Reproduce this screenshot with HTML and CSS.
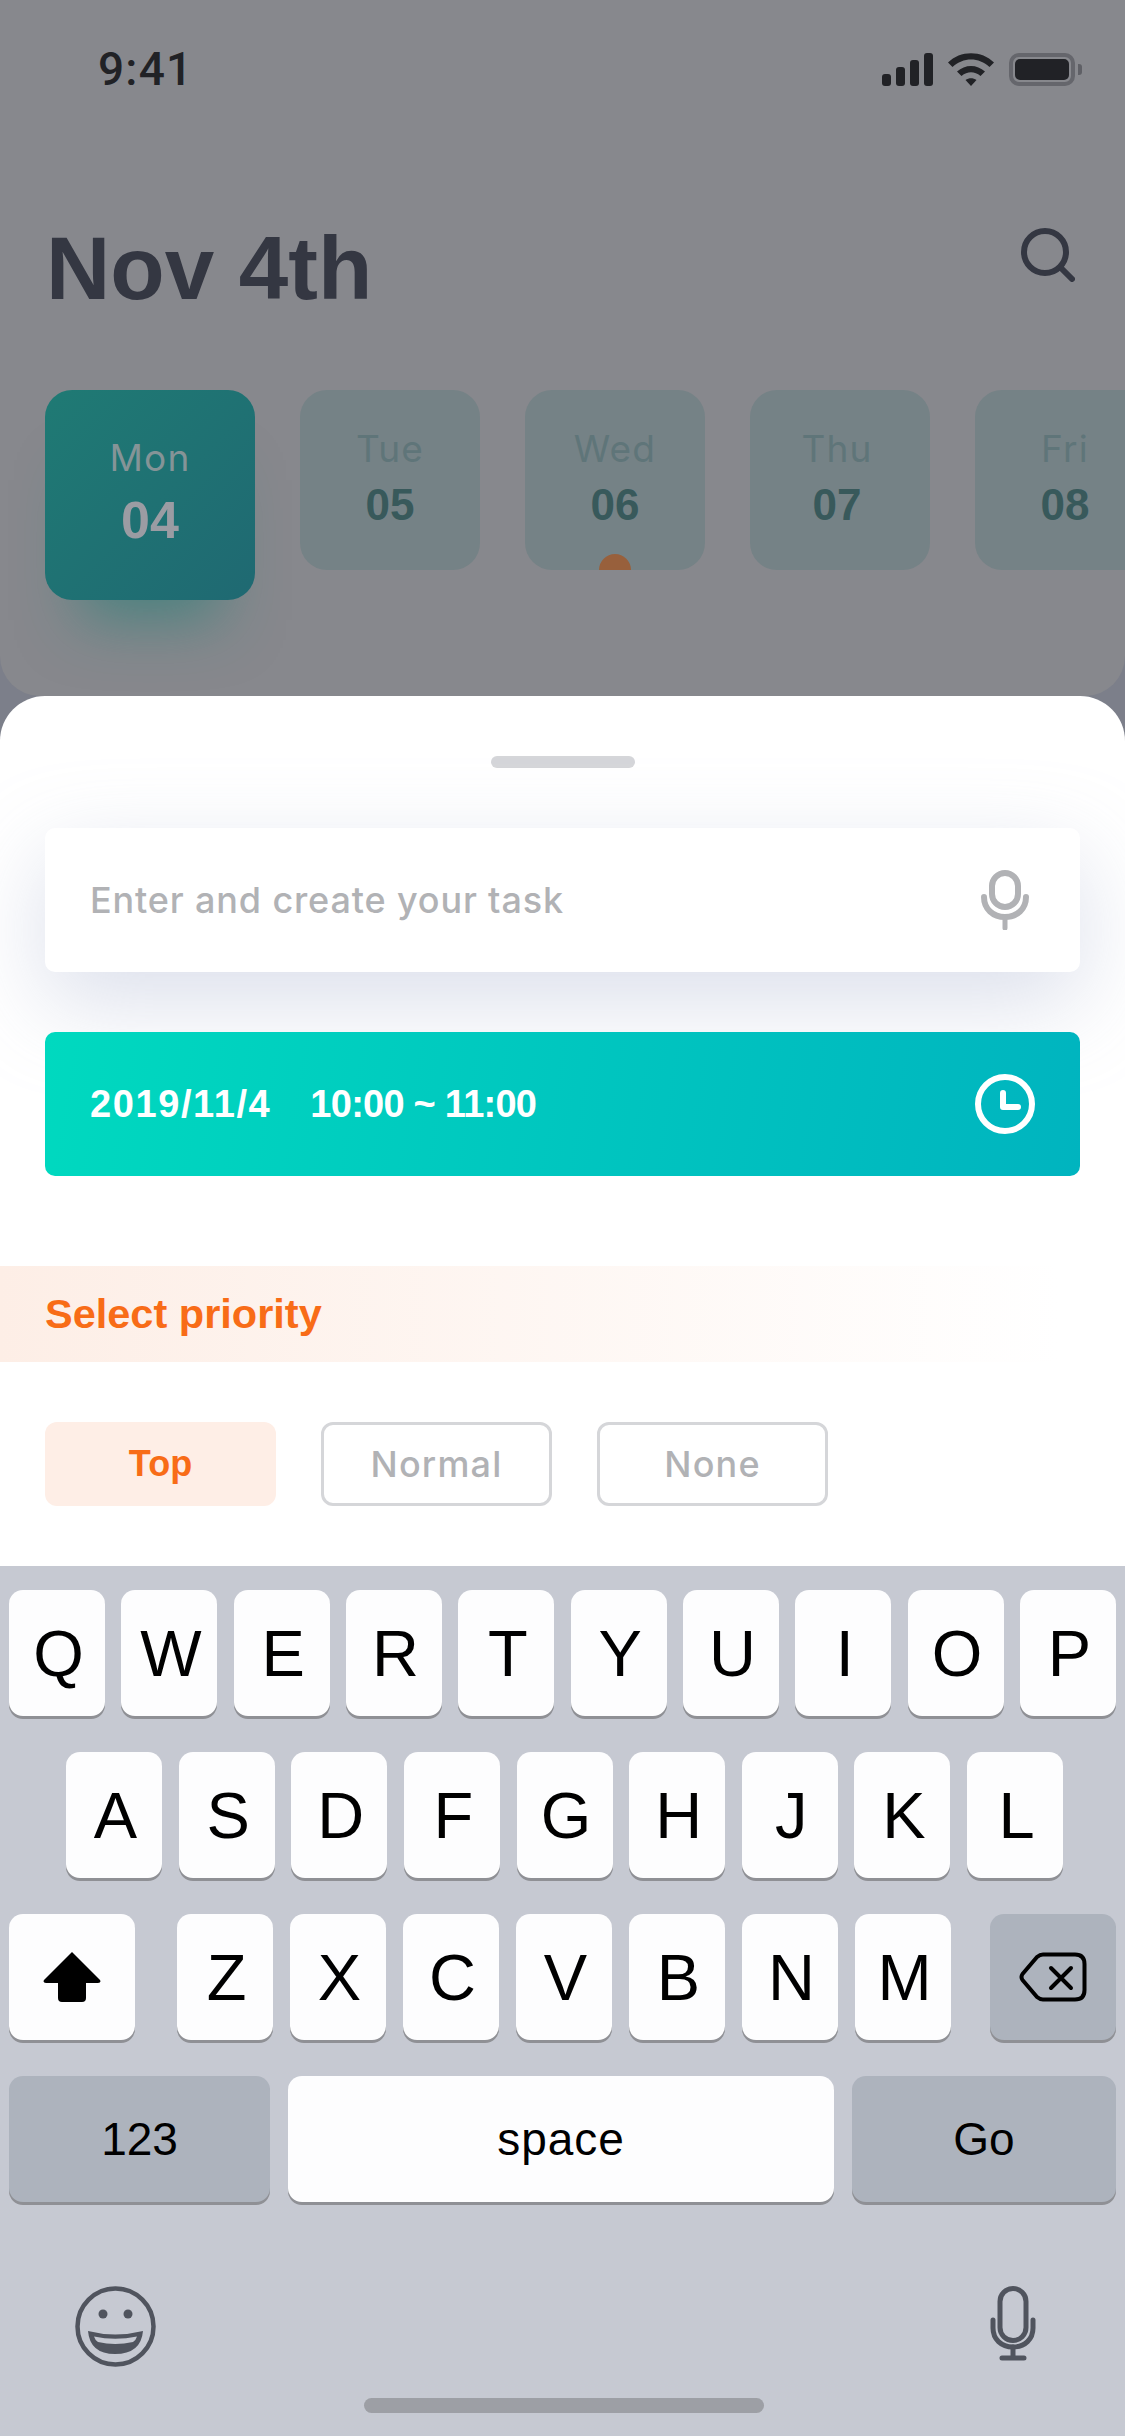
FILE: index.html
```html
<!DOCTYPE html>
<html lang="en">
<head>
    <meta charset="UTF-8">
    <meta name="viewport" content="width=device-width, initial-scale=1.0">
    <title>Create task</title>
    <link rel="stylesheet" href="styles.css">
</head>
<body>
    <div class="screen">
        <div class="top">
            <div class="status-bar">
                <span class="time">9:41</span>
                <div class="status-icons">
                    <svg width="51" height="33" viewBox="0 0 51 33" fill="#212226">
                        <rect x="0" y="21" width="9" height="12" rx="3"/>
                        <rect x="14" y="14" width="9" height="19" rx="3"/>
                        <rect x="28" y="7" width="9" height="26" rx="3"/>
                        <rect x="42" y="0" width="9" height="33" rx="3"/>
                    </svg>
                    <svg width="46" height="33" viewBox="0 0 46 33" fill="#212226">
                        <path d="M0 9.5C12-3 34-3 46 9.5L41.5 14C31 4 15 4 4.500 14Z"/>
                        <path d="M9 18.500C17 11 29 11 37 18.500L32.500 23C26.500 18 19.500 18 13.500 23Z"/>
                        <path d="M17.500 27C21 24.500 25 24.500 28.500 27L23 33Z"/>
                    </svg>
                    <div class="battery"><div class="battery-fill"></div></div>
                    <div class="battery-nub"></div>
                </div>
            </div>

            <div class="header">
                <h1>Nov 4th</h1>
                <svg class="search" width="54" height="54" viewBox="0 0 54 54" fill="none" stroke="#343742" stroke-width="6" stroke-linecap="round">
                    <circle cx="24" cy="24" r="21"/>
                    <path d="M41 41L51 51"/>
                </svg>
            </div>

            <div class="days">
                <div class="day day-active">
                    <span class="day-name">Mon</span>
                    <span class="day-num">04</span>
                </div>
                <div class="day">
                    <span class="day-name">Tue</span>
                    <span class="day-num">05</span>
                </div>
                <div class="day">
                    <span class="day-name">Wed</span>
                    <span class="day-num">06</span>
                    <span class="day-dot"></span>
                </div>
                <div class="day day-thu">
                    <span class="day-name">Thu</span>
                    <span class="day-num">07</span>
                </div>
                <div class="day">
                    <span class="day-name">Fri</span>
                    <span class="day-num">08</span>
                </div>
            </div>
        </div>

        <div class="sheet">
            <div class="handle"></div>

            <div class="task-input">
                <span>Enter and create your task</span>
                <svg width="48" height="60" viewBox="0 0 48 60" fill="none" stroke="#b1b2b5" stroke-linecap="round">
                    <rect x="11" y="3" width="26" height="34" rx="13" stroke-width="6"/>
                    <path d="M3 27C3 39 12 47 24 47C36 47 45 39 45 27" stroke-width="6"/>
                    <path d="M24 47V58" stroke-width="5"/>
                </svg>
            </div>

            <div class="date-bar">
                <div class="date-text"><span class="date-day">2019/11/4</span><span class="date-time">10:00 ~ 11:00</span></div>
                <svg width="60" height="60" viewBox="0 0 60 60" fill="none" stroke="#fff" stroke-width="6">
                    <circle cx="30" cy="30" r="27"/>
                    <path d="M28 19V33H43" stroke-linecap="round" stroke-linejoin="round"/>
                </svg>
            </div>

            <div class="priority-title">Select priority</div>

            <div class="priority-list">
                <div class="pill pill-active">Top</div>
                <div class="pill">Normal</div>
                <div class="pill">None</div>
            </div>
        </div>

        <div class="keyboard">
            <div class="key-row">
                <div class="key">Q</div><div class="key">W</div><div class="key">E</div><div class="key">R</div><div class="key">T</div>
                <div class="key">Y</div><div class="key">U</div><div class="key">I</div><div class="key">O</div><div class="key">P</div>
            </div>
            <div class="key-row key-row-middle">
                <div class="key">A</div><div class="key">S</div><div class="key">D</div><div class="key">F</div><div class="key">G</div>
                <div class="key">H</div><div class="key">J</div><div class="key">K</div><div class="key">L</div>
            </div>
            <div class="key-row">
                <div class="key key-side key-shift">
                    <svg width="58" height="50" viewBox="0 0 58 50" fill="#000">
                        <path d="M29 0L57 28Q58.500 31 55 31H43V46Q43 50 39 50H19Q15 50 15 46V31H3Q-.5 31 1 28Z"/>
                    </svg>
                </div>
                <div class="letters">
                    <div class="key">Z</div><div class="key">X</div><div class="key">C</div><div class="key">V</div>
                    <div class="key">B</div><div class="key">N</div><div class="key">M</div>
                </div>
                <div class="key key-side key-dark">
                    <svg width="68" height="50" viewBox="0 0 68 50" fill="none" stroke="#000" stroke-width="4" stroke-linecap="round" stroke-linejoin="round">
                        <path d="M24 2.500H56Q65.500 2.500 65.500 12V38Q65.500 47.500 56 47.500H24Q21 47.500 18 45L3.500 28Q1.500 25 3.500 22L18 5Q21 2.500 24 2.500Z"/>
                        <path d="M32 16L52 36M52 16L32 36"/>
                    </svg>
                </div>
            </div>
            <div class="key-row key-row-bottom">
                <div class="key key-dark key-word key-123">123</div>
                <div class="key key-word key-space">space</div>
                <div class="key key-dark key-word key-go">Go</div>
            </div>

            <div class="kb-icons">
                <svg width="81" height="81" viewBox="0 0 81 81">
                    <circle cx="40.500" cy="40.500" r="38" fill="none" stroke="#50545e" stroke-width="4.500"/>
                    <circle cx="28" cy="28" r="4.500" fill="#50545e"/>
                    <circle cx="53" cy="28" r="4.500" fill="#50545e"/>
                    <path d="M13 45Q40 52 68 45Q66 68 40 68Q15 68 13 45Z" fill="#50545e"/>
                    <path d="M19 50.500Q40 55 62 50.500Q61 54 58 56Q40 60 23 56Q20 54 19 50.500Z" fill="#c6c9d2"/>
                </svg>
                <svg width="46" height="75" viewBox="0 0 46 75" fill="none" stroke="#50545e" stroke-width="5" stroke-linecap="round">
                    <rect x="10" y="2.500" width="26" height="52" rx="13"/>
                    <path d="M3 34V42C3 53 11 61 23 61C35 61 43 53 43 42V34"/>
                    <path d="M23 61V72M12 72H34"/>
                </svg>
            </div>

            <div class="home-indicator"></div>
        </div>
    </div>
</body>
</html>
```
FILE: styles.css
```css
* {
    margin: 0;
    padding: 0;
    box-sizing: border-box;
}

body {
    font-family: "Liberation Sans", Arial, sans-serif;
    width: 1125px;
    height: 2436px;
    overflow: hidden;
}

.screen {
    display: flex;
    flex-direction: column;
    height: 2436px;
    background: #7c7f8a;
}

.top {
    height: 696px;
    background: #87888d;
    border-radius: 0 0 40px 40px;
    overflow: hidden;
}

.status-bar {
    display: flex;
    justify-content: space-between;
    align-items: center;
    height: 92px;
    padding: 46px 43px 0 98px;
}

.time {
    font-family: Roboto, sans-serif;
    font-size: 46px;
    font-weight: 500;
    line-height: 46px;
    letter-spacing: 1.200px;
    color: #212226;
}

.status-icons {
    display: flex;
    align-items: center;
    gap: 15px;
}

.battery {
    width: 66px;
    height: 33px;
    border: 4px solid #65666c;
    border-radius: 10px;
    padding: 2px;
}

.battery-fill {
    height: 100%;
    background: #212226;
    border-radius: 5px;
}

.battery-nub {
    width: 4px;
    height: 11px;
    margin-left: -12px;
    background: #5f6066;
    border-radius: 0 3px 3px 0;
}

.header {
    display: flex;
    justify-content: space-between;
    align-items: flex-start;
    margin-top: 126px;
    padding: 0 49px 0 46px;
}

h1 {
    font-size: 89px;
    line-height: 100px;
    font-weight: bold;
    color: #343742;
}

.search {
    margin-top: 10px;
    margin-right: 1px;
}

.days {
    display: flex;
    align-items: flex-start;
    gap: 45px;
    margin-top: 72px;
    padding-left: 45px;
}

.day {
    position: relative;
    flex: none;
    display: flex;
    flex-direction: column;
    align-items: center;
    width: 180px;
    height: 180px;
    padding-top: 37px;
    background: #758286;
    border-radius: 27px;
    overflow: hidden;
}

.day-thu {
    padding-right: 6px;
}

.day-name {
    font-family: Inter, sans-serif;
    font-size: 37px;
    line-height: 44px;
    letter-spacing: 1.200px;
    color: #5f7579;
}

.day-num {
    margin-top: 10px;
    font-size: 44px;
    line-height: 48px;
    font-weight: bold;
    color: #38595b;
}

.day-dot {
    position: absolute;
    left: 74px;
    bottom: -16px;
    width: 32px;
    height: 32px;
    border-radius: 50%;
    background: #98603c;
}

.day-active {
    width: 210px;
    height: 210px;
    padding-top: 46px;
    background: linear-gradient(135deg, #1f7a74 0%, #1f6972 100%);
    box-shadow: 0 55px 60px -35px rgba(31, 125, 116, 0.6);
    overflow: visible;
}

.day-active .day-name {
    color: #859497;
}

.day-active .day-num {
    margin-top: 12px;
    font-size: 52px;
    line-height: 56px;
    color: #9b9ca3;
}

.sheet {
    height: 870px;
    background: #fff;
    border-radius: 45px 45px 0 0;
    padding-top: 60px;
    overflow: hidden;
}

.handle {
    width: 144px;
    height: 12px;
    margin: 0 auto;
    background: #d5d6d9;
    border-radius: 6px;
}

.task-input,
.date-bar {
    display: flex;
    justify-content: space-between;
    align-items: center;
    height: 144px;
    margin: 60px 45px 0;
    border-radius: 10px;
}

.task-input {
    padding: 0 51px 0 45px;
    background: #fff;
    box-shadow: 0 30px 90px rgba(175, 185, 210, 0.45);
    font-family: Inter, sans-serif;
    font-size: 36px;
    font-weight: 500;
    letter-spacing: 0.850px;
    color: #b1b2b5;
}

.date-bar {
    position: relative;
    padding: 0 45px;
    background: linear-gradient(100deg, #00d9bf 0%, #00b4bf 100%);
}

.date-text {
    display: flex;
    gap: 39px;
    font-size: 38px;
    font-weight: bold;
    color: #fff;
}

.date-day {
    letter-spacing: 1.600px;
}

.date-time {
    letter-spacing: -0.750px;
}

.priority-title {
    display: flex;
    align-items: center;
    height: 96px;
    margin-top: 90px;
    padding-left: 45px;
    background: linear-gradient(90deg, #fdeee6 0%, #fff 94%);
    font-size: 41.500px;
    font-weight: bold;
    color: #f86c17;
}

.priority-list {
    display: flex;
    gap: 45px;
    margin-top: 60px;
    padding-left: 45px;
}

.pill {
    display: flex;
    align-items: center;
    justify-content: center;
    width: 231px;
    height: 84px;
    border: 3px solid #d5d6d9;
    border-radius: 12px;
    font-family: Inter, sans-serif;
    font-size: 36px;
    font-weight: 500;
    letter-spacing: 1.200px;
    color: #b1b2b5;
}

.pill-active {
    border: none;
    background: #feeee6;
    font-family: "Liberation Sans", Arial, sans-serif;
    font-size: 36px;
    font-weight: bold;
    letter-spacing: 0;
    color: #f86c17;
}

.keyboard {
    flex: 1;
    padding: 24px 9px 0;
    background: #c6c9d2;
}

.key-row {
    display: flex;
    justify-content: space-between;
    margin-bottom: 36px;
}

.key-row-middle {
    padding: 0 53px 0 57px;
}

.key-row-bottom {
    gap: 18px;
    margin-bottom: 0;
}

.letters {
    display: flex;
    gap: 17px;
    margin-left: 3px;
}

.key {
    display: flex;
    align-items: center;
    justify-content: center;
    flex: none;
    width: 96px;
    height: 126px;
    padding-left: 3px;
    background: #fdfdfe;
    border-radius: 14px;
    box-shadow: 0 3px 0 #8f9095;
    font-size: 65px;
    color: #000;
}

.key-side {
    width: 126px;
    padding-left: 0;
}

.key-dark {
    background: #adb3bd;
}

.key-word {
    padding-left: 0;
    font-size: 46px;
}

.key-123 {
    width: 261px;
}

.key-space {
    width: 546px;
    letter-spacing: 1px;
}

.key-go {
    width: 264px;
}

.kb-icons {
    display: flex;
    justify-content: space-between;
    align-items: flex-start;
    margin-top: 84px;
    padding: 0 80px 0 66px;
}

.home-indicator {
    width: 400px;
    height: 15px;
    margin: 31px auto 0;
    transform: translateX(1px);
    background: #9d9fa5;
    border-radius: 8px;
}
```
